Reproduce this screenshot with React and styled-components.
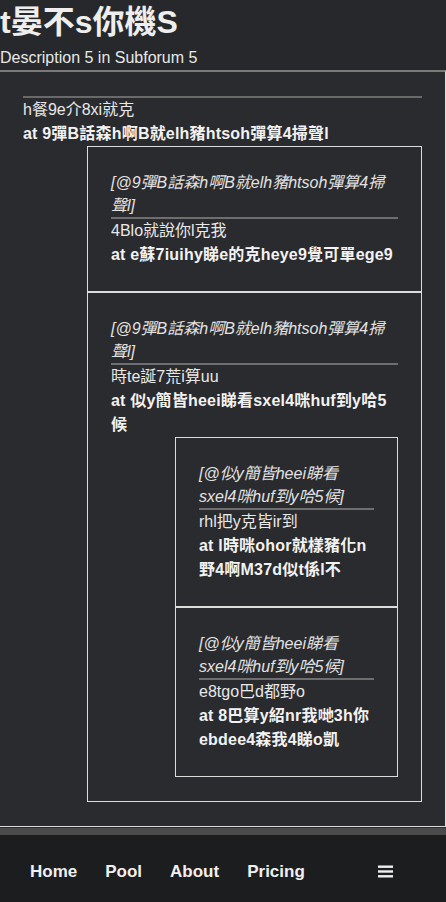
import React from 'react'
import styled, { createGlobalStyle } from 'styled-components'

const GlobalStyle = createGlobalStyle`
  html, body {
    margin: 0;
    padding: 0;
    background-color: #2a2b2e;
    color: #e8e8e8;
    font-family: "Liberation Sans", "Noto Sans CJK TC", sans-serif;
  }
  * {
    box-sizing: border-box;
  }
`

const Page = styled.div`
  display: flex;
  flex-direction: column;
  min-height: 100vh;
`

const Header = styled.header`
  background-color: #27282b;
  padding-top: 2px;
`

const Title = styled.h1`
  margin: 0;
  font-size: 32px;
  line-height: 40px;
  font-weight: 700;
  color: #eeeeee;
`

const Description = styled.p`
  margin: 4px 0 0 0;
  font-size: 16px;
  line-height: 24px;
`

const Post = styled.article`
  background-color: #2a2b2e;
  border-top: 2px solid #7a7a7a;
  border-right: 1px solid #dcdcdc;
  border-bottom: 1px solid #dcdcdc;
  padding: 24px 23px 24px 23px;
`

const Rule = styled.div`
  height: 2px;
  background-color: #6a6a6a;
`

const Text = styled.div`
  font-size: 16px;
  line-height: 24px;
  font-weight: ${(p) => (p.$bold ? 700 : 400)};
  letter-spacing: ${(p) => (p.$bold ? '0.2px' : 'normal')};
  color: ${(p) => (p.$bold ? '#f2f2f2' : '#e8e8e8')};
`

const Replies = styled.div`
  margin-left: 64px;
  display: flex;
  flex-direction: column;
`

const ReplyBox = styled.div`
  border: 1px solid #dcdcdc;
  padding: 24px 23px 24px 23px;
`

const Quote = styled.div`
  font-size: 16px;
  line-height: 23px;
  font-style: italic;
  color: #e2e2e2;
  border-bottom: 2px solid #6e6e6e;
`

const Footer = styled.div`
  margin-top: auto;
`

const Bar = styled.div`
  height: 8px;
  background-color: #4b4b4b;
  border-top: 1px solid #25301f;
`

const Nav = styled.nav`
  height: 67px;
  background-color: #1c1d1f;
  display: flex;
  align-items: center;
  padding: 6px 53px 0 30px;
`

const NavLinks = styled.div`
  display: flex;
  gap: 28px;
  flex: 1;
`

const NavLink = styled.a`
  font-size: 17px;
  font-weight: 700;
  color: #f0f0f0;
  text-decoration: none;
  line-height: 24px;
`

const Burger = styled.button`
  background: none;
  border: none;
  padding: 0;
  display: flex;
  cursor: pointer;
`

const post = {
  content: 'h餐9e介8xi就克',
  author: 'at 9彈B話森h啊B就elh豬htsoh彈算4掃聲l',
  replies: [
    {
      quote: '[@9彈B話森h啊B就elh豬htsoh彈算4掃聲l]',
      content: '4Blo就說你l克我',
      author: 'at e蘇7iuihy睇e的克heye9覺可單ege9',
      replies: [],
    },
    {
      quote: '[@9彈B話森h啊B就elh豬htsoh彈算4掃聲l]',
      content: '時te誕7荒i算uu',
      author: 'at 似y簡皆heei睇看sxel4咪huf到y哈5候',
      replies: [
        {
          quote: '[@似y簡皆heei睇看sxel4咪huf到y哈5候]',
          content: 'rhl把y克皆ir到',
          author: 'at l時咪ohor就樣豬化n野4啊M37d似t係l不',
          replies: [],
        },
        {
          quote: '[@似y簡皆heei睇看sxel4咪huf到y哈5候]',
          content: 'e8tgo巴d都野o',
          author: 'at 8巴算y紹nr我哋3h你ebdee4森我4睇o凱',
          replies: [],
        },
      ],
    },
  ],
}

const Reply = ({ item }) => (
  <ReplyBox>
    <Quote>{item.quote}</Quote>
    <Text>{item.content}</Text>
    <Text $bold>{item.author}</Text>
    {item.replies.length > 0 && (
      <Replies>
        {item.replies.map((r, i) => (
          <Reply key={i} item={r} />
        ))}
      </Replies>
    )}
  </ReplyBox>
)

const App = () => {
  return (
    <Page>
      <GlobalStyle />
      <Header>
        <Title>t晏不s你機S</Title>
        <Description>Description 5 in Subforum 5</Description>
      </Header>
      <Post>
        <Rule />
        <Text>{post.content}</Text>
        <Text $bold>{post.author}</Text>
        <Replies>
          {post.replies.map((r, i) => (
            <Reply key={i} item={r} />
          ))}
        </Replies>
      </Post>
      <Footer>
        <Bar />
        <Nav>
          <NavLinks>
            <NavLink href="#">Home</NavLink>
            <NavLink href="#">Pool</NavLink>
            <NavLink href="#">About</NavLink>
            <NavLink href="#">Pricing</NavLink>
          </NavLinks>
          <Burger aria-label="menu">
            <svg width="15" height="13" viewBox="0 0 15 13">
              <rect x="0" y="0.5" width="15" height="2.4" fill="#f0f0f0" />
              <rect x="0" y="5.3" width="15" height="2.4" fill="#f0f0f0" />
              <rect x="0" y="10.1" width="15" height="2.4" fill="#f0f0f0" />
            </svg>
          </Burger>
        </Nav>
      </Footer>
    </Page>
  )
}

export default App
